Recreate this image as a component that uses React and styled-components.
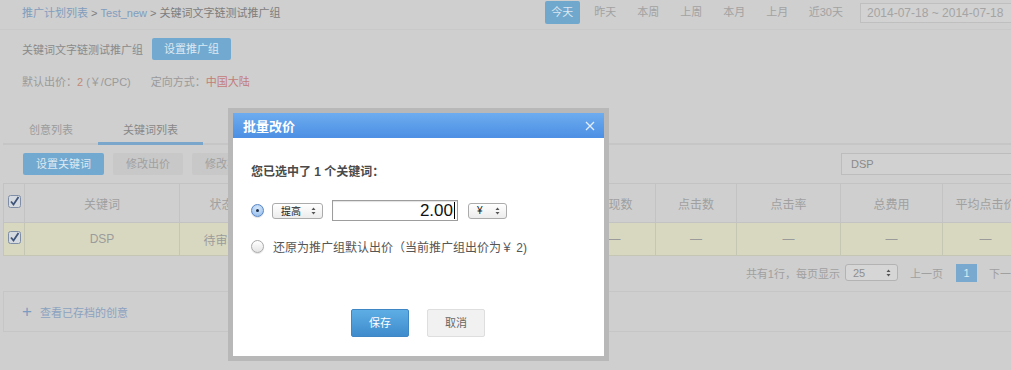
import React from "react";
import styled, { createGlobalStyle } from "styled-components";

const FONT = `"Liberation Sans", "Noto Sans CJK SC", sans-serif`;

const Global = createGlobalStyle`
  html, body { margin: 0; padding: 0; overflow: hidden; }
  body { background: #cfcfcf; font-family: ${FONT}; font-size: 11px; color: #8a8a8a; }
  * { box-sizing: border-box; }
`;

const Page = styled.div`
  position: relative;
  width: 1030px;
  height: 370px;
  padding-right: 8px;
`;

const TopBar = styled.div`
  display: flex;
  align-items: flex-start;
  height: 30px;
  padding-left: 22px;
  border-bottom: 1px solid #c9c9c9;
`;

const Crumbs = styled.div`
  margin-top: 2px;
  line-height: 23px;
  font-size: 11px;
  color: #7d7d7d;
`;

const CrumbLink = styled.span`
  color: #819dbe;
`;

const DateGroup = styled.div`
  margin-left: auto;
  display: flex;
  align-items: flex-start;
  gap: 8px;
`;

const DateBtn = styled.div`
  margin-top: 1px;
  height: 23px;
  line-height: 23px;
  padding: 0 6px;
  min-width: 35px;
  text-align: center;
  font-size: 11px;
  color: ${(p) => (p.$active ? "#dbe8f1" : "#a2a2a2")};
  background: ${(p) => (p.$active ? "#6fa7cd" : "transparent")};
  border-radius: 2px;
`;

const DateInput = styled.div`
  margin-top: 3px;
  margin-left: 3px;
  width: 162px;
  height: 20px;
  line-height: 18px;
  padding-left: 6px;
  border: 1px solid #bfbfbf;
  background: #d2d2d2;
  font-size: 12px;
  color: #a4a4a4;
  white-space: nowrap;
`;

const GroupRow = styled.div`
  display: flex;
  align-items: center;
  margin-top: 8px;
  padding-left: 22px;
  height: 22px;
  gap: 9px;
  color: #8a8a8a;
`;

const BlueBtn = styled.div`
  height: 22px;
  line-height: 22px;
  padding: 0 ${(p) => p.$pad || 12}px;
  background: #72a9d0;
  color: #dce9f3;
  border-radius: 2px;
  font-size: 11px;
  white-space: nowrap;
`;

const GreyBtn = styled(BlueBtn)`
  background: #c8c8c8;
  color: #a0a0a0;
`;

const InfoRow = styled.div`
  display: flex;
  margin-top: 14px;
  padding-left: 22px;
  line-height: 16px;
  color: #9a9a9a;
`;

const InfoItem = styled.span`
  margin-right: 20px;
`;

const Red = styled.span`
  color: ${(p) => p.$c || "#c28a76"};
`;

const Panel = styled.div`
  margin-top: 28px;
  margin-left: 3px;
`;

const TabBar = styled.div`
  display: flex;
  padding-left: 1px;
  border-bottom: 2px solid #c6c6c6;
`;

const Tab = styled.div`
  padding: 0 25px;
  line-height: 24px;
  font-size: 11px;
  margin-bottom: -2px;
  border-bottom: 3px solid ${(p) => (p.$active ? "#79a6ca" : "transparent")};
  color: ${(p) => (p.$active ? "#888" : "#9c9c9c")};
`;

const Toolbar = styled.div`
  display: flex;
  align-items: center;
  margin: 8px 0;
  padding-left: 20px;
  gap: 9px;
`;

const Search = styled.div`
  margin-left: auto;
  width: 181px;
  height: 22px;
  line-height: 20px;
  padding-left: 9px;
  border: 1px solid #bdbdbd;
  background: #d1d1d1;
  color: #8a8a8a;
  font-size: 11px;
`;

const Table = styled.table`
  border-collapse: collapse;
  table-layout: fixed;
  width: 1025px;
  font-size: 12px;
`;

const Th = styled.th`
  height: 39px;
  border: 1px solid #c3c3c3;
  font-weight: normal;
  color: #a0a0a0;
  text-align: center;
  white-space: nowrap;
  overflow: hidden;
  padding: 0;
`;

const Td = styled.td`
  height: 33px;
  border: 1px solid #c6c6b4;
  background: #d8d8c1;
  color: #9b9b9b;
  text-align: center;
  white-space: nowrap;
  overflow: hidden;
  padding: 0;
`;

const Pager = styled.div`
  display: flex;
  align-items: center;
  justify-content: flex-end;
  height: 35px;
  padding-bottom: 2px;
  color: #a0a0a0;
  font-size: 11px;
`;

const PageSelect = styled.div`
  display: flex;
  align-items: center;
  justify-content: space-between;
  margin-left: 5px;
  width: 53px;
  height: 17px;
  padding: 0 6px 0 7px;
  border: 1px solid #b3b3b3;
  border-radius: 3px;
  background: #d6d6d6;
  color: #8f8f8f;
  font-size: 11px;
`;

const PageLink = styled.span`
  margin-left: 12px;
`;

const PageNum = styled.div`
  margin-left: 13px;
  width: 21px;
  height: 18px;
  line-height: 18px;
  text-align: center;
  background: #79a9cf;
  color: #dce9f3;
`;

const Footer = styled.div`
  display: flex;
  align-items: center;
  height: 41px;
  padding-left: 18px;
  border: 1px solid #c6c6c6;
  border-right: none;
  color: #8ba2c0;
  font-size: 11px;
`;

const Plus = styled.span`
  font-size: 17px;
  color: #7a9cc0;
  margin-right: 8px;
  line-height: 1;
`;

/* Modal */
const Modal = styled.div`
  position: absolute;
  left: 228px;
  top: 108px;
  width: 381px;
  border: 5px solid #b8b8b8;
  background: #fff;
`;

const ModalHead = styled.div`
  display: flex;
  align-items: center;
  justify-content: space-between;
  height: 25px;
  padding: 0 9px 0 10px;
  background: linear-gradient(#6dacef, #4c8fe4);
`;

const ModalTitle = styled.div`
  color: #fff;
  font-size: 13px;
  font-weight: bold;
`;

const ModalBody = styled.div`
  padding: 27px 19px 19px 18px;
  color: #444;
  font-size: 12px;
`;

const Lead = styled.div`
  line-height: 14px;
  font-weight: bold;
  color: #4a4a4a;
`;

const OptRow = styled.div`
  display: flex;
  align-items: center;
  margin-top: ${(p) => p.$mt}px;
  height: ${(p) => p.$h}px;
`;

const Radio = styled.span`
  position: relative;
  width: 13px;
  height: 13px;
  border-radius: 50%;
  flex: none;
  border: 1px solid ${(p) => (p.$on ? "#5a86c4" : "#a9a9a9")};
  background: ${(p) =>
    p.$on
      ? "radial-gradient(circle at 50% 30%, #d6e8fb, #8fb9ea)"
      : "linear-gradient(#ffffff, #e4e4e4)"};
  box-shadow: 0 1px 1px rgba(0, 0, 0, 0.12);
  &::after {
    content: "";
    display: ${(p) => (p.$on ? "block" : "none")};
    position: absolute;
    left: 4px;
    top: 4px;
    width: 3px;
    height: 3px;
    border-radius: 50%;
    background: #1d2f4a;
  }
`;

const MacSelect = styled.div`
  display: flex;
  align-items: center;
  justify-content: space-between;
  margin-left: ${(p) => p.$ml}px;
  width: ${(p) => p.$w}px;
  height: 16px;
  padding: 0 6px 0 8px;
  border: 1px solid #ababab;
  border-radius: 3px;
  background: linear-gradient(#ffffff, #ececec);
  font-size: 10px;
  color: #222;
  flex: none;
`;

const PriceBox = styled.div`
  display: flex;
  align-items: center;
  justify-content: flex-end;
  margin-left: 9px;
  width: 126px;
  height: 21px;
  padding-right: 2px;
  border: 1px solid #9d9d9d;
  box-shadow: inset 0 1px 1px rgba(0, 0, 0, 0.12);
  font-size: 17px;
  color: #111;
  flex: none;
`;

const Caret = styled.span`
  width: 1px;
  height: 17px;
  margin-left: 1px;
  background: #000;
`;

const OptText = styled.span`
  margin-left: 9px;
  color: #555;
`;

const Actions = styled.div`
  display: flex;
  justify-content: center;
  gap: 18px;
  margin-top: 55px;
`;

const ActBtn = styled.div`
  width: 58px;
  height: 28px;
  line-height: 26px;
  text-align: center;
  border-radius: 2px;
  font-size: 11px;
  border: 1px solid ${(p) => (p.$primary ? "#3f86c4" : "#dedede")};
  background: ${(p) => (p.$primary ? "linear-gradient(#5eaee5, #3f8bcc)" : "#f1f1f1")};
  color: ${(p) => (p.$primary ? "#fff" : "#666")};
`;

const Updown = () => (
  <svg width="5" height="8" viewBox="0 0 5 8">
    <path d="M2.5 0.5 L4.5 3 L0.5 3 Z M2.5 7.5 L4.5 5 L0.5 5 Z" fill="#555" />
  </svg>
);

const Check = () => (
  <svg width="13" height="13" viewBox="0 0 13 13">
    <rect x="0.5" y="0.5" width="12" height="12" rx="2" fill="#d5d9e0" stroke="#7f8ea6" />
    <path d="M3 6.5 L5.5 9.5 L10.5 2" fill="none" stroke="#3f5479" strokeWidth="1.8" />
  </svg>
);

const Close = () => (
  <svg width="10" height="10" viewBox="0 0 10 10">
    <path d="M1 1 L9 9 M9 1 L1 9" stroke="#e3eeff" strokeWidth="1.3" />
  </svg>
);

const cols = [21, 155, 84, 110, 100, 100, 82, 81, 104, 102, 86];
const heads = ["", "关键词", "状态", "出价", "质量度", "平均排名", "展现数", "点击数", "点击率", "总费用", "平均点击价"];
const cells = ["", "DSP", "待审核", "2.00", "—", "—", "—", "—", "—", "—", "—"];

export default function App() {
  return (
    <Page>
      <Global />
      <TopBar>
        <Crumbs>
          <CrumbLink>推广计划列表</CrumbLink> &gt; <CrumbLink>Test_new</CrumbLink> &gt; 关键词文字链测试推广组
        </Crumbs>
        <DateGroup>
          <DateBtn $active>今天</DateBtn>
          <DateBtn>昨天</DateBtn>
          <DateBtn>本周</DateBtn>
          <DateBtn>上周</DateBtn>
          <DateBtn>本月</DateBtn>
          <DateBtn>上月</DateBtn>
          <DateBtn>近30天</DateBtn>
          <DateInput>2014-07-18 ~ 2014-07-18</DateInput>
        </DateGroup>
      </TopBar>

      <GroupRow>
        <span>关键词文字链测试推广组</span>
        <BlueBtn $pad={12}>设置推广组</BlueBtn>
      </GroupRow>

      <InfoRow>
        <InfoItem>
          默认出价：<Red>2</Red> (￥/CPC)
        </InfoItem>
        <InfoItem>
          定向方式：<Red $c="#c27c78">中国大陆</Red>
        </InfoItem>
      </InfoRow>

      <Panel>
        <TabBar>
          <Tab>创意列表</Tab>
          <Tab $active>关键词列表</Tab>
        </TabBar>
        <Toolbar>
          <BlueBtn $pad={13}>设置关键词</BlueBtn>
          <GreyBtn $pad={13}>修改出价</GreyBtn>
          <GreyBtn $pad={13}>修改状态</GreyBtn>
          <Search>DSP</Search>
        </Toolbar>
        <Table>
          <colgroup>
            {cols.map((w, i) => (
              <col key={i} style={{ width: w }} />
            ))}
          </colgroup>
          <thead>
            <tr>
              {heads.map((h, i) => (
                <Th key={i}>{i === 0 ? <Check /> : h}</Th>
              ))}
            </tr>
          </thead>
          <tbody>
            <tr>
              {cells.map((c, i) => (
                <Td key={i}>{i === 0 ? <Check /> : c}</Td>
              ))}
            </tr>
          </tbody>
        </Table>
        <Pager>
          <span>共有1行，每页显示</span>
          <PageSelect>
            <span>25</span>
            <Updown />
          </PageSelect>
          <PageLink>上一页</PageLink>
          <PageNum>1</PageNum>
          <PageLink>下一页</PageLink>
        </Pager>
        <Footer>
          <Plus>+</Plus>
          <span>查看已存档的创意</span>
        </Footer>
      </Panel>

      <Modal>
        <ModalHead>
          <ModalTitle>批量改价</ModalTitle>
          <Close />
        </ModalHead>
        <ModalBody>
          <Lead>您已选中了 1 个关键词：</Lead>
          <OptRow $mt={21} $h={21}>
            <Radio $on />
            <MacSelect $ml={8} $w={51}>
              <span>提高</span>
              <Updown />
            </MacSelect>
            <PriceBox>
              2.00
              <Caret />
            </PriceBox>
            <MacSelect $ml={10} $w={39}>
              <span>¥</span>
              <Updown />
            </MacSelect>
          </OptRow>
          <OptRow $mt={17} $h={16}>
            <Radio />
            <OptText>还原为推广组默认出价（当前推广组出价为￥ 2)</OptText>
          </OptRow>
          <Actions>
            <ActBtn $primary>保存</ActBtn>
            <ActBtn>取消</ActBtn>
          </Actions>
        </ModalBody>
      </Modal>
    </Page>
  );
}
